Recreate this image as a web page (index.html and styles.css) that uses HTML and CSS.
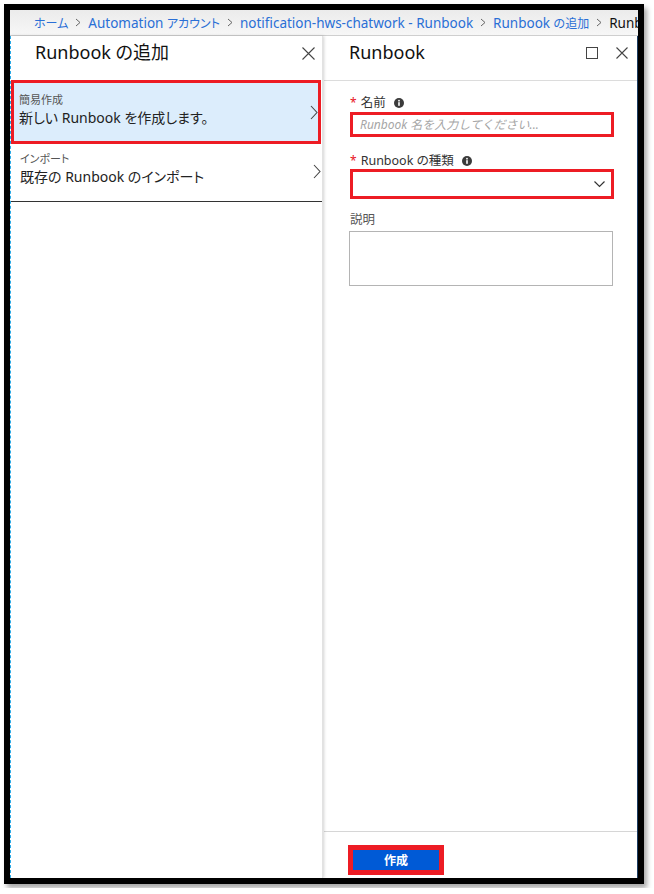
FILE: index.html
```html
<!DOCTYPE html>
<html lang="ja">
<head>
    <meta charset="UTF-8">
    <title>Runbook の追加</title>
    <link rel="stylesheet" href="styles.css">
</head>
<body>
    <div class="frame">
        <div class="breadcrumb">
            <a class="crumb jp">ホーム</a>
            <svg class="sep" width="6" height="9" viewBox="0 0 6 9"><polyline points="1,1 5,4.5 1,8" fill="none" stroke="#666" stroke-width="1"/></svg>
            <a class="crumb">Automation <span class="jp">アカウント</span></a>
            <svg class="sep" width="6" height="9" viewBox="0 0 6 9"><polyline points="1,1 5,4.5 1,8" fill="none" stroke="#666" stroke-width="1"/></svg>
            <a class="crumb">notification-hws-chatwork - Runbook</a>
            <svg class="sep" width="6" height="9" viewBox="0 0 6 9"><polyline points="1,1 5,4.5 1,8" fill="none" stroke="#666" stroke-width="1"/></svg>
            <a class="crumb">Runbook <span class="jp">の追加</span></a>
            <svg class="sep" width="6" height="9" viewBox="0 0 6 9"><polyline points="1,1 5,4.5 1,8" fill="none" stroke="#666" stroke-width="1"/></svg>
            <span class="crumb current">Runbook</span>
        </div>

        <div class="panels">
            <!-- 左ブレード -->
            <div class="blade-left">
                <div class="blade-header">
                    <h2 class="blade-title">Runbook の追加</h2>
                    <svg class="close" width="13" height="13" viewBox="0 0 13 13"><path d="M0.5 0.5 L12.5 12.5 M12.5 0.5 L0.5 12.5" stroke="#444" stroke-width="1.1"/></svg>
                </div>
                <div class="option selected">
                    <div class="option-text">
                        <div class="option-label">簡易作成</div>
                        <div class="option-main">新しい Runbook を作成します。</div>
                    </div>
                    <svg class="chevron" width="8" height="15" viewBox="0 0 8 15"><polyline points="1,1 7,7.5 1,14" fill="none" stroke="#444" stroke-width="1.1"/></svg>
                </div>
                <div class="option last">
                    <div class="option-text">
                        <div class="option-label">インポート</div>
                        <div class="option-main">既存の Runbook のインポート</div>
                    </div>
                    <svg class="chevron" width="8" height="15" viewBox="0 0 8 15"><polyline points="1,1 7,7.5 1,14" fill="none" stroke="#444" stroke-width="1.1"/></svg>
                </div>
            </div>

            <!-- 右ブレード -->
            <div class="blade-right">
                <div class="blade-header bordered">
                    <h2 class="blade-title">Runbook</h2>
                    <div class="header-icons">
                        <svg width="12" height="12" viewBox="0 0 12 12"><rect x="0.5" y="0.5" width="11" height="11" fill="none" stroke="#444" stroke-width="1"/></svg>
                        <svg width="12" height="12" viewBox="0 0 12 12"><path d="M0.5 0.5 L11.5 11.5 M11.5 0.5 L0.5 11.5" stroke="#444" stroke-width="1.1"/></svg>
                    </div>
                </div>

                <div class="form">
                    <div class="field-label">
                        <span class="required">*</span>名前
                        <svg class="info" width="10" height="10" viewBox="0 0 10 10"><circle cx="5" cy="5" r="5" fill="#3b3b3b"/><rect x="4.2" y="4.2" width="1.6" height="3.6" fill="#fff"/><circle cx="5" cy="2.7" r="0.9" fill="#fff"/></svg>
                    </div>
                    <input class="text-input marked" type="text" placeholder="Runbook 名を入力してください...">

                    <div class="field-label second">
                        <span class="required">*</span>Runbook の種類
                        <svg class="info" width="10" height="10" viewBox="0 0 10 10"><circle cx="5" cy="5" r="5" fill="#3b3b3b"/><rect x="4.2" y="4.2" width="1.6" height="3.6" fill="#fff"/><circle cx="5" cy="2.7" r="0.9" fill="#fff"/></svg>
                    </div>
                    <div class="select marked">
                        <svg width="11" height="7" viewBox="0 0 11 7"><polyline points="0.5,0.5 5.5,5.5 10.5,0.5" fill="none" stroke="#333" stroke-width="1.2"/></svg>
                    </div>

                    <div class="field-label plain">説明</div>
                    <textarea class="textarea"></textarea>
                </div>

                <div class="footer">
                    <button class="create-button">作成</button>
                </div>
            </div>
        </div>
    </div>
</body>
</html>
```

FILE: styles.css
```css
body {
    margin: 0;
    background-color: #fff;
    font-family: "Noto Sans", "Noto Sans CJK JP", sans-serif;
    font-feature-settings: "palt";
    color: #222;
}
.frame {
    width: 628px;
    height: 868px;
    margin: 4px;
    border: 6px solid #000;
    box-shadow: 3px 4px 5px rgba(0, 0, 0, 0.35);
    display: flex;
    flex-direction: column;
    overflow: hidden;
    background-color: #fff;
}
.breadcrumb {
    height: 25px;
    flex-shrink: 0;
    border-bottom: 1px solid #cfcfcf;
    background: linear-gradient(#ebebeb, #f7f7f7);
    display: flex;
    align-items: center;
    padding-left: 24px;
    white-space: nowrap;
    font-size: 13.5px;
}
.crumb {
    color: #2a6fd6;
}
.crumb .jp,
.crumb.jp {
    font-size: 12px;
}
.crumb.current {
    color: #111;
}
.sep {
    margin: 0 7px 0 7px;
    flex-shrink: 0;
}
.panels {
    flex: 1;
    display: flex;
    min-height: 0;
}
.blade-left {
    width: 311px;
    border-left: 1px dashed #2aa9e6;
    box-shadow: 1px 0 3px rgba(0, 0, 0, 0.18);
    border-right: 1px solid #e2e2e2;
    position: relative;
    z-index: 1;
}
.blade-right {
    flex: 1;
    display: flex;
    flex-direction: column;
    border-right: 1px solid #1c3d63;
    margin-left: 1px;
}
.blade-header {
    height: 44px;
    display: flex;
    justify-content: space-between;
    align-items: flex-start;
    padding: 4px 7px 0 24px;
    box-sizing: border-box;
}
.blade-header.bordered {
    height: 45px;
    border-bottom: 1px solid #dcdcdc;
    padding: 4px 9px 0 25px;
}
.blade-title {
    margin: 0;
    font-size: 18px;
    font-weight: normal;
    line-height: 24px;
    color: #111;
}
.close {
    margin-top: 7px;
}
.header-icons {
    display: flex;
    gap: 18px;
    margin-top: 7px;
}
.option {
    display: flex;
    align-items: center;
    justify-content: space-between;
    padding: 7px 1px 14px 9px;
}
.option.selected {
    background-color: #dcedfc;
    border: 3px solid #ed1c24;
    padding: 9px 0 13px 5px;
    margin-right: 1px;
}
.option.last {
    border-bottom: 1px solid #333;
}
.option-label {
    font-size: 11px;
    line-height: 16px;
    color: #555;
}
.option-main {
    font-size: 14px;
    line-height: 20px;
    color: #222;
}
.chevron {
    margin-top: 4px;
}
.form {
    flex: 1;
    padding: 15px 0 0 26px;
}
.field-label {
    font-size: 12.5px;
    line-height: 14px;
    color: #333;
    display: flex;
    align-items: center;
    margin-bottom: 2px;
}
.field-label.second {
    margin-top: 17px;
    margin-bottom: 1px;
}
.field-label.plain {
    margin-top: 14px;
    margin-bottom: 4px;
    color: #555;
}
.required {
    color: #e81123;
    margin-right: 4px;
    font-size: 12px;
}
.info {
    margin-left: 8px;
}
.marked {
    border: 3px solid #ed1c24;
    box-sizing: border-box;
    width: 264px;
    background-color: #fff;
}
.text-input {
    display: block;
    height: 25px;
    padding: 0 0 0 7px;
    font-family: inherit;
    font-size: 12px;
    outline: none;
}
.text-input::placeholder {
    color: #a6a6a6;
    font-style: italic;
}
.select {
    height: 30px;
    display: flex;
    align-items: center;
    justify-content: flex-end;
    padding-right: 6px;
}
.textarea {
    display: block;
    width: 264px;
    height: 55px;
    margin: 0 0 0 -1px;
    border: 1px solid #b4b4b4;
    box-sizing: border-box;
    resize: none;
}
.footer {
    height: 47px;
    border-top: 1px solid #d6d6d6;
    padding: 13px 0 0 24px;
    box-sizing: border-box;
}
.create-button {
    display: block;
    width: 96px;
    height: 30px;
    border: 5px solid #ed1c24;
    background-color: #005ad6;
    color: #fff;
    font-family: inherit;
    font-weight: bold;
    font-size: 12px;
    padding: 0;
}
```
